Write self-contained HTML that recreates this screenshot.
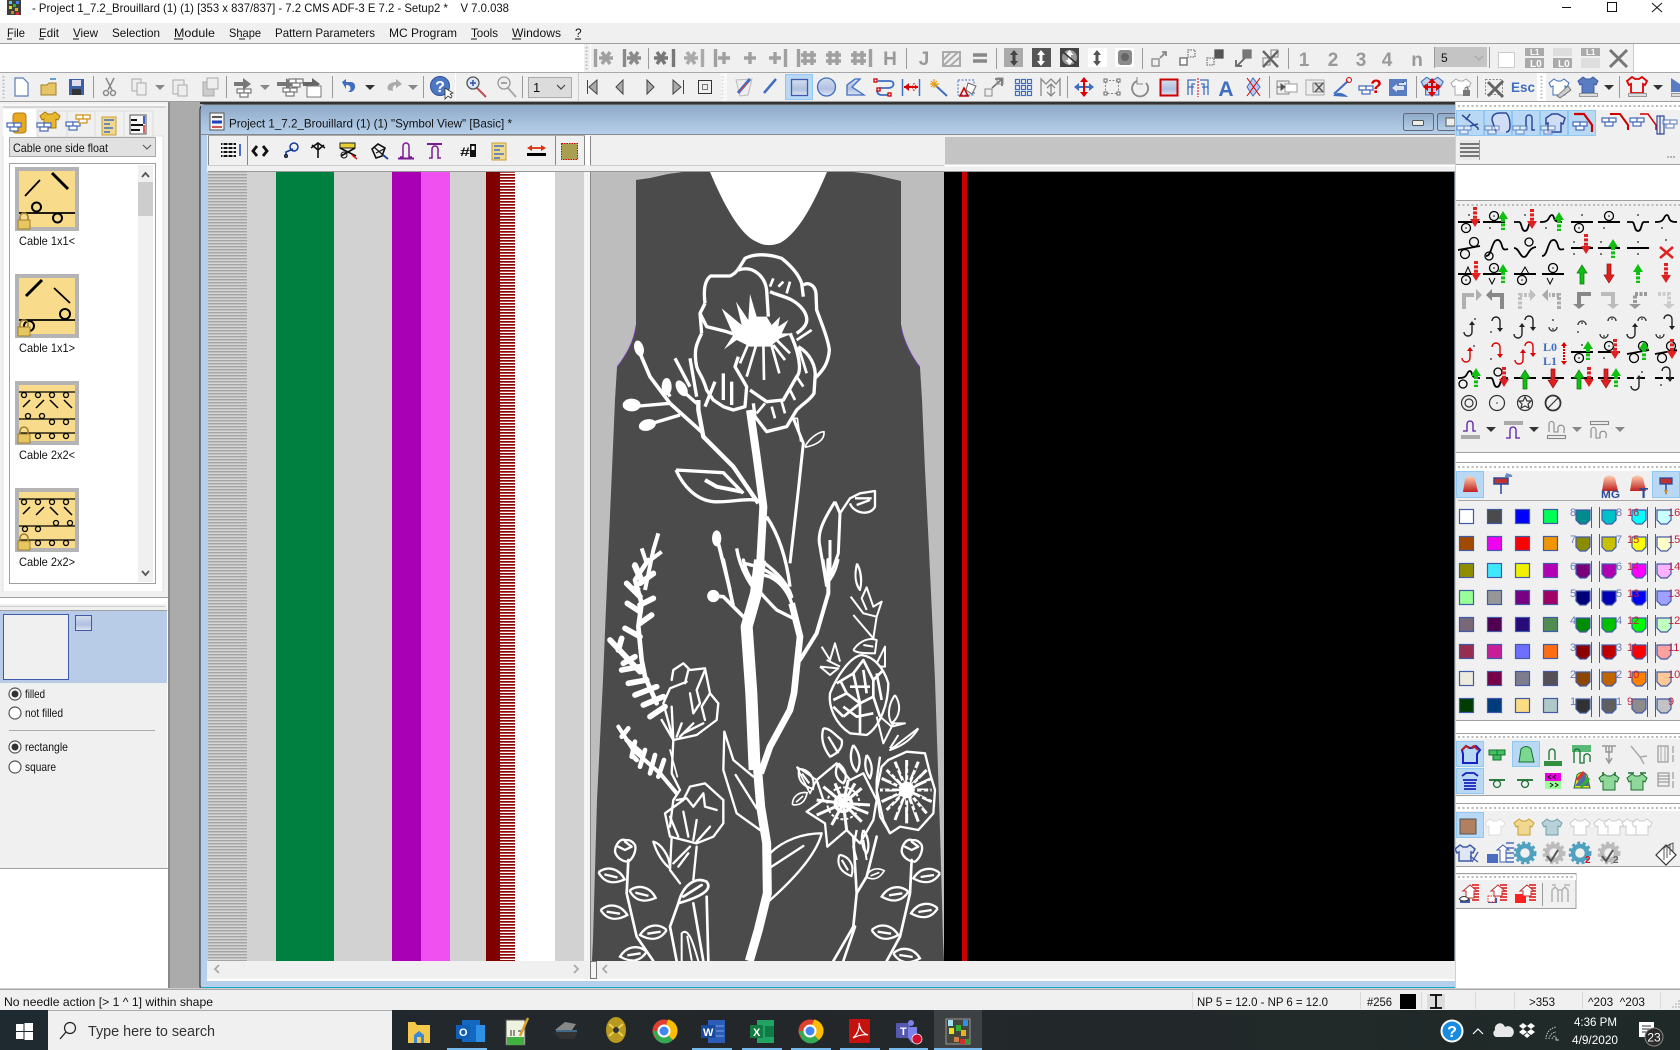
<!DOCTYPE html>
<html><head><meta charset="utf-8"><title>Project</title>
<style>
html,body{margin:0;padding:0;background:#fff;overflow:hidden;width:1680px;height:1050px}
svg{display:block;font-family:"Liberation Sans",sans-serif}
text{fill:#111;font-size:12px}
.b{font-weight:bold;fill:#999;font-size:19px;text-anchor:middle}
.n{font-size:11px;fill:#6a7ab8}
.r{font-size:11px;fill:#c02040}
</style></head><body>
<svg width="1680" height="1050" viewBox="0 0 1680 1050" xmlns="http://www.w3.org/2000/svg">
<defs>
<linearGradient id="tg" x1="0" y1="0" x2="0" y2="1"><stop offset="0" stop-color="#8eaac8"/><stop offset="1" stop-color="#b6cfea"/></linearGradient>
<linearGradient id="bg" x1="0" y1="0" x2="0" y2="1"><stop offset="0" stop-color="#d4def0"/><stop offset=".6" stop-color="#b0c0e0"/><stop offset="1" stop-color="#dfe6f4"/></linearGradient>
<linearGradient id="rb" x1="0" y1="0" x2="0" y2="1"><stop offset="0" stop-color="#ffd0b0"/><stop offset="1" stop-color="#c02020"/></linearGradient>
<linearGradient id="dk" x1="0" y1="0" x2="1" y2="0"><stop offset="0" stop-color="#1e2a30"/><stop offset=".45" stop-color="#24272a"/><stop offset="1" stop-color="#1f2a28"/></linearGradient>
<pattern id="hh" width="3" height="3" patternUnits="userSpaceOnUse"><rect width="3" height="3" fill="#d4d4d4"/><rect width="3" height="1.4" fill="#a4a4a4"/></pattern>
<pattern id="rr" width="3" height="3" patternUnits="userSpaceOnUse"><rect width="3" height="3" fill="#fff"/><rect width="3" height="1.7" fill="#8c0000"/></pattern>
<g id="car"><path d="M-5 -2H5L0 3Z" fill="#333"/></g>
<g id="cag"><path d="M-5 -2H5L0 3Z" fill="#888"/></g>
<g id="a"><path d="M-7 0H7M-4 -6L4 6M4 -6L-4 6" fill="none"/></g>
<g id="p"><path d="M-6 0H6M0 -6V6" fill="none"/></g>
<g id="h"><path d="M-3 -7V7M4 -7V7M-7 -3H8M-7 3H8" fill="none"/></g>
<g id="br"><g fill="#fff" stroke="#4468b8" stroke-width="1.2"><rect x="-7" y="-4" width="7" height="4"/><rect x="0" y="-4" width="7" height="4"/><rect x="-4" y="0" width="8" height="4"/></g></g>
<g id="brg"><g fill="#fff" stroke="#777" stroke-width="1.2"><rect x="-7" y="-4" width="7" height="4"/><rect x="0" y="-4" width="7" height="4"/><rect x="-4" y="0" width="8" height="4"/></g></g>
<g id="lk"><path d="M-4 -2V-5A4 4 0 0 1 4 -5V-2" fill="none" stroke="#a08030" stroke-width="1.6"/><rect x="-6" y="-2" width="12" height="9" fill="#e6c660" stroke="#a08030"/></g>
<g id="ll"><path d="M-11 0H11" stroke="#000" stroke-width="2" fill="none"/><circle cx="-3" cy="6" r="4.500" fill="none" stroke="#000" stroke-width="1.300"/><circle cx="-3" cy="6" r=".8"/></g>
<g id="lu"><path d="M-11 0H11" stroke="#000" stroke-width="2" fill="none"/><circle cx="0" cy="-6" r="4.500" fill="none" stroke="#000" stroke-width="1.300"/><circle cx="0" cy="-6" r=".8"/></g>
<g id="lv"><path d="M-11 0H-6C-3 0 -4 9 0 9S3 0 6 0H11" stroke="#000" stroke-width="1.8" fill="none"/></g>
<g id="ln"><path d="M-11 0C-7 0 -4 0 -2 -4C0 -8 2 -8 3 -4C4 0 8 0 11 0" stroke="#000" stroke-width="1.8" fill="none"/></g>
<g id="sw"><path d="M-11 2L11 -2" stroke="#000" stroke-width="1.8" fill="none"/><circle cx="-4" cy="6" r="4.500" fill="none" stroke="#000" stroke-width="1.3"/><circle cx="5" cy="-6" r="4.500" fill="none" stroke="#000" stroke-width="1.3"/></g>
<g id="wv"><path d="M-11 8C-6 8 -6 -2 -2 -7C2 -10 4 -6 5 -2C6 2 8 2 11 1" stroke="#000" stroke-width="1.8" fill="none"/></g>
<g id="d"><rect x="-1" y="-1" width="2" height="2" fill="#777"/></g>
<g id="ug"><path d="M-5 0L0 -8L5 0H2V11H-2V0Z" fill="#10c010" stroke="#0a700a" stroke-width=".7"/></g>
<g id="dr"><path d="M-5 2L0 10L5 2H2V-9H-2V2Z" fill="#e02020" stroke="#901010" stroke-width=".7"/></g>
<g id="ugd"><path d="M-5 0L0 -8L5 0Z" fill="#10c010"/><path d="M0 0V11" stroke="#10c010" stroke-width="4" stroke-dasharray="3 1.4"/></g>
<g id="drd"><path d="M-5 3L0 11L5 3Z" fill="#e02020"/><path d="M0 -9V3" stroke="#e02020" stroke-width="4" stroke-dasharray="3 1.4"/></g>
<g id="hk"><path d="M-5 4A4 4 0 1 0 3 4V-3" fill="none" stroke="#222" stroke-width="1.4"/><path d="M0 -3L3 -7L6 -3Z" fill="#222"/></g>
<g id="hkd"><path d="M-5 -3A4 4 0 1 1 3 -3V4" fill="none" stroke="#222" stroke-width="1.4"/><path d="M0 4L3 8L6 4Z" fill="#222"/></g>
<g id="hkr"><path d="M-5 4A4 4 0 1 0 3 4V-3" fill="none" stroke="#d00" stroke-width="1.4"/><path d="M0 -3L3 -7L6 -3Z" fill="#d00"/></g>
<g id="hkrd"><path d="M-5 -3A4 4 0 1 1 3 -3V4" fill="none" stroke="#d00" stroke-width="1.4"/><path d="M0 4L3 8L6 4Z" fill="#d00"/></g>
<g id="lo"><path d="M-4 -1A4 4 0 1 1 4 -1" fill="none" stroke="#333" stroke-width="1.3"/><circle cy="-3" r=".8"/></g>
<g id="lf"><path d="M-40 -5C-15 -27 20 -22 40 10C10 27 -20 27 -40 -5M-22 0L18 6" fill="none" stroke="#fff" stroke-width="7"/></g>
<g id="pk"><path d="M-7 -7H7V3L3 7H-3L-7 3Z"/></g>
<g id="sh"><path d="M-5 -8L-2 -6H2L5 -8L10 -4L8 0L6 -1V8H-6V-1L-8 0L-10 -4Z"/></g>
</defs>

<!-- base -->
<rect width="1680" height="1050" fill="#fff"/>
<rect x="7" y="0" width="14" height="15" fill="#3c4036"/>
<rect x="9" y="1" width="3" height="3" fill="#60c0f0"/><rect x="16" y="1" width="3" height="3" fill="#4080f0"/><rect x="9" y="6" width="3" height="3" fill="#e8e020"/><rect x="13" y="4" width="3" height="3" fill="#30b030"/><rect x="15" y="8" width="3" height="3" fill="#e8b020"/><rect x="11" y="11" width="3" height="3" fill="#d08040"/><rect x="16" y="12" width="3" height="3" fill="#d03030"/>
<text x="32" y="12" textLength="477" lengthAdjust="spacingAndGlyphs">- Project 1_7.2_Brouillard (1) (1) [353 x 837/837] - 7.2 CMS ADF-3 E 7.2 - Setup2 *&#160;&#160;&#160; V 7.0.038</text>
<path d="M1562 7.5H1571" stroke="#111"/><rect x="1607.5" y="2.5" width="9" height="9" fill="none" stroke="#111"/><path d="M1652 3L1662 12M1662 3L1652 12" stroke="#111"/>

<!-- menu -->
<rect y="23" width="1680" height="20" fill="#f0f0f0"/><rect y="43" width="1680" height="1" fill="#a0a0a0"/>
<g>
<text x="7" y="37" textLength="18" lengthAdjust="spacingAndGlyphs">File</text>
<text x="39" y="37" textLength="20" lengthAdjust="spacingAndGlyphs">Edit</text>
<text x="73" y="37" textLength="25" lengthAdjust="spacingAndGlyphs">View</text>
<text x="112" y="37" textLength="48" lengthAdjust="spacingAndGlyphs">Selection</text>
<text x="174" y="37" textLength="41" lengthAdjust="spacingAndGlyphs">Module</text>
<text x="229" y="37" textLength="32" lengthAdjust="spacingAndGlyphs">Shape</text>
<text x="275" y="37" textLength="100" lengthAdjust="spacingAndGlyphs">Pattern Parameters</text>
<text x="389" y="37" textLength="68" lengthAdjust="spacingAndGlyphs">MC Program</text>
<text x="471" y="37" textLength="27" lengthAdjust="spacingAndGlyphs">Tools</text>
<text x="512" y="37" textLength="49" lengthAdjust="spacingAndGlyphs">Windows</text>
<text x="575" y="37">?</text>
<path d="M7 39H12M39 39H44M73 39H79M174 39H183M239 39H245M471 39H477M512 39H521M575 39H581" stroke="#111"/>
</g>

<!-- toolbars base -->
<rect x="584" y="44" width="1049" height="28" fill="#f0f0f0"/><rect x="0" y="72" width="1680" height="1" fill="#a8a8a8"/>
<rect x="0" y="73" width="1680" height="28" fill="#f0f0f0"/><rect x="0" y="101" width="1680" height="1" fill="#a0a0a0"/>
<path d="M586.5 47V70" stroke="#bbb" stroke-width="2" stroke-dasharray="1.5 2"/><rect x="590" y="44" width="1" height="28" fill="#fff"/>
<path d="M3.5 76V99" stroke="#bbb" stroke-width="2" stroke-dasharray="1.5 2"/>

<!-- toolbar row 1 -->
<g stroke-width="3.4">
<g stroke="#a0a0a0"><path d="M595.5 49V67"/><use href="#a" x="606" y="58"/></g>
<g stroke="#8a8a8a"><path d="M624.5 49V67"/><use href="#a" x="634" y="58"/></g>
<g stroke="#777"><use href="#a" x="661" y="58"/><path d="M673.5 49V67"/></g>
<g stroke="#aaa"><use href="#a" x="691" y="58"/><path d="M702.5 49V67"/></g>
<g stroke="#a0a0a0"><path d="M715.5 49V67"/><use href="#p" x="724" y="58"/><use href="#p" x="750" y="58"/><use href="#p" x="775" y="58"/><path d="M785.5 49V67"/><path d="M798.5 49V67"/><use href="#h" x="808" y="58"/><use href="#h" x="833" y="58"/><use href="#h" x="858" y="58"/><path d="M870.5 49V67"/></g>
</g>
<text class="b" x="890" y="65">H</text><text class="b" x="924" y="65">J</text>
<g stroke="#aaa" stroke-width="2" fill="none"><path d="M943 52H960V66H943ZM943 60L951 52M943 66L958 52M950 66L960 57"/></g>
<path d="M973 55H987M973 61H987" stroke="#888" stroke-width="3.4"/>
<path d="M648.5 48V69M906.5 48V69M996.5 48V69M1142.5 48V69M1288.5 48V69M1489.5 47V68" stroke="#9a9a9a"/>
<rect x="1004" y="48" width="19" height="19" fill="#aaa"/><rect x="1032" y="48" width="19" height="19" fill="#555"/><rect x="1060" y="48" width="19" height="19" fill="#444"/><rect x="1088" y="48" width="19" height="19" fill="#fff"/><rect x="1115" y="48" width="19" height="19" fill="#fff"/>
<path d="M1014 50L1010 55H1012.500V61H1010L1014 66L1018 61H1015.500V55H1018Z" fill="#444"/>
<path d="M1041 50L1037 55H1039.500V61H1037L1041 66L1045 61H1042.500V55H1045Z" fill="#fff"/>
<circle cx="1069.500" cy="57.500" r="7.500" fill="#999"/><path d="M1069.500 50L1065.500 55H1068V60H1065.500L1069.500 65L1073.500 60H1071V55H1073.500Z" fill="#fff"/><path d="M1063 52L1076 63" stroke="#333" stroke-width="1.500"/>
<path d="M1097 50L1093 55H1095.500V61H1093L1097 66L1101 61H1098.500V55H1101Z" fill="#555"/>
<rect x="1118" y="50" width="14" height="15" rx="3" fill="#8a8a8a"/><circle cx="1125" cy="57" r="4" fill="#666"/>
<g fill="none" stroke="#888" stroke-width="1.300">
<rect x="1152" y="59" width="7" height="7"/><path d="M1160 58L1166 52M1162 52H1166V56" stroke-width="1.800"/>
<rect x="1180" y="58" width="7" height="7" fill="#fff" stroke="#666"/><rect x="1188" y="50" width="7" height="7" stroke-dasharray="1.500 1" stroke="#777"/>
<rect x="1207" y="58" width="7" height="7" stroke-dasharray="1.500 1" stroke="#777"/><rect x="1215" y="50" width="8" height="8" fill="#555" stroke="#555"/>
<path d="M1237 66L1245 58M1236 60V66H1242" stroke-width="1.800" stroke="#666"/><rect x="1243" y="50" width="8" height="8" fill="#777" stroke="#777"/>
<rect x="1263" y="58" width="7" height="7" stroke="#999"/><rect x="1271" y="50" width="7" height="7" stroke="#999"/><path d="M1263 51L1278 67M1278 51L1263 67" stroke="#666" stroke-width="2.400"/>
</g>
<text class="b" x="1304" y="66">1</text><text class="b" x="1333" y="66">2</text><text class="b" x="1361" y="66">3</text><text class="b" x="1387" y="66">4</text><text class="b" x="1417" y="66">n</text>
<rect x="1434" y="47" width="53" height="20" fill="#c4c4c4"/><path d="M1434.500 47V68" stroke="#999"/><text x="1441" y="62">5</text><path d="M1475 56L1479 60L1483 56" fill="none" stroke="#aaa" stroke-width="1.300"/>
<rect x="1498.500" y="52.500" width="16" height="15" fill="#fff" stroke="#ccc"/>
<g><rect x="1525" y="48" width="19" height="8" fill="#aaa"/><rect x="1525" y="58" width="19" height="10" fill="#aaa"/><rect x="1553" y="48" width="19" height="8" fill="#ddd"/><rect x="1553" y="58" width="19" height="10" fill="#aaa"/><rect x="1581" y="48" width="19" height="8" fill="#aaa"/><rect x="1581" y="58" width="19" height="10" fill="#ddd"/></g>
<g style="font-weight:bold"><text x="1530" y="55" style="font-size:8px;fill:#fff;font-weight:bold">L1</text><text x="1530" y="67" style="font-size:10px;fill:#fff;font-weight:bold">L0</text><text x="1558" y="67" style="font-size:10px;fill:#fff;font-weight:bold">L0</text><text x="1586" y="55" style="font-size:8px;fill:#fff;font-weight:bold">L1</text></g>
<path d="M1610 50L1627 67M1627 50L1610 67" stroke="#777" stroke-width="3"/>
<rect x="1633" y="44" width="1" height="28" fill="#ccc"/>

<!-- toolbar row 2 -->
<path d="M93.500 76V98M226.500 76V98M332.500 76V98M423.500 76V98M522.500 76V98M1067.500 76V98M1269.500 76V98M1416.500 76V98M1477.500 76V98M1619.500 76V98" stroke="#999"/>
<rect x="455" y="73" width="1" height="28" fill="#fff"/><rect x="578" y="73" width="1" height="28" fill="#ccc"/>
<path d="M15 78H23L28 83V96H15Z" fill="#fff" stroke="#5a7ab8" stroke-width="1.200"/>
<path d="M41 85H47L49 83H56V95H41Z" fill="#e8c468" stroke="#a08030"/><path d="M50 79L56 79" stroke="#4080c0" stroke-width="1.500"/>
<rect x="69" y="79" width="15" height="16" fill="#3d5fa8"/><rect x="72" y="80" width="9" height="6" fill="#dde"/><rect x="72" y="89" width="9" height="6" fill="#333"/>
<g fill="none" stroke="#888" stroke-width="1.500"><path d="M106 78L112 90M114 78L108 90"/><circle cx="106" cy="93" r="2.500"/><circle cx="113" cy="93" r="2.500"/></g>
<g fill="#eee" stroke="#aaa"><rect x="132" y="79" width="9" height="12"/><rect x="137" y="83" width="9" height="12"/><rect x="173" y="80" width="11" height="14"/><rect x="178" y="85" width="9" height="11"/><rect x="203" y="82" width="11" height="14" fill="#ccc"/><rect x="207" y="78" width="11" height="11"/></g>
<use href="#cag" x="160" y="87"/><use href="#cag" x="265" y="87"/><use href="#car" x="370" y="87"/><use href="#cag" x="413" y="87"/>
<path d="M234 82H243V78L251 84L243 90V86H234Z" fill="#777"/><use href="#brg" x="244" y="93"/>
<path d="M277 82H286V78L294 84L286 90V86H277Z" fill="#777"/><use href="#brg" x="290" y="92"/><use href="#brg" x="296" y="83"/>
<path d="M303 82H312V78L320 84L312 90V86H303Z" fill="#666"/><rect x="307" y="86" width="14" height="11" fill="#fff" stroke="#777"/>
<path d="M342 82L346 79V82H351C356 82 357 90 351 92L348 92C352 90 351 85 347 85H346V89Z" fill="#3f6ec0"/>
<path d="M388 90C386 84 392 82 396 82V79L402 84L396 88V85C393 85 392 88 393 91Z" fill="#aaa"/>
<circle cx="440" cy="86" r="9.500" fill="#4d78c4" stroke="#2e4f96"/><text x="440" y="92" style="font-size:16px;font-weight:bold;fill:#fff;text-anchor:middle">?</text><path d="M445 88L445 99L448 96L451 98L452 96L450 94L453 93Z" fill="#fff" stroke="#333" stroke-width=".8"/>
<circle cx="473" cy="83" r="6" fill="#dde6f6" stroke="#555" stroke-width="1.300"/><path d="M470 83H476M473 80V86" stroke="#2d50b0" stroke-width="1.500"/><path d="M477 88L486 97" stroke="#c05050" stroke-width="2"/>
<circle cx="504" cy="83" r="6" fill="#eee" stroke="#999" stroke-width="1.300"/><path d="M501 83H507" stroke="#888" stroke-width="1.500"/><path d="M508 88L516 97" stroke="#aaa" stroke-width="2"/>
<rect x="528.500" y="77.500" width="43" height="20" fill="#dcdcdc" stroke="#aaa"/><text x="533" y="92" style="font-size:13px">1</text><path d="M557 85L561 89L565 85" fill="none" stroke="#444" stroke-width="1.200"/>
<g fill="#aaa" stroke="#444"><path d="M597 80L589 87L597 94ZM587.500 80V94" /><path d="M623 80L616 87L623 94Z"/><path d="M647 80L654 87L647 94Z"/><path d="M673 80L681 87L673 94ZM683.500 80V94"/></g>
<rect x="698.500" y="80.500" width="13" height="13" fill="none" stroke="#333"/><rect x="702.500" y="84.500" width="5" height="5" fill="none" stroke="#777"/>
<path d="M722.500 76V99" stroke="#bbb" stroke-width="2" stroke-dasharray="1.500 2"/><rect x="721" y="73" width="6" height="28" fill="#fff" opacity=".5"/>
<path d="M740 96L736 80L752 79L748 95Z" fill="#eee" stroke="#bbb"/><path d="M738 93L750 79" stroke="#3f6ec0" stroke-width="3"/><path d="M740 91L747 83" stroke="#e04040" stroke-width="1"/>
<path d="M764 93L776 79" stroke="#3f6ec0" stroke-width="2.500"/>
<rect x="785.500" y="74.500" width="27" height="25" fill="#b8d8f4" stroke="#90c8f4"/><rect x="791.500" y="79.500" width="16" height="16" fill="url(#bg)" stroke="#3f5aa8" stroke-width="1.300"/>
<circle cx="826.500" cy="87" r="9" fill="url(#bg)" stroke="#3f6ec0" stroke-width="1.300"/>
<path d="M847 95V85L855 79H860L852 87L864 95Z" fill="url(#bg)" stroke="#3f6ec0" stroke-width="1.300"/>
<path d="M878 81H890C895 81 895 88 888 88H880C876 88 876 94 881 95H890" fill="none" stroke="#3f6ec0" stroke-width="1.800"/><g fill="#fff" stroke="#c00" stroke-width="1.300"><rect x="874" y="79" width="3" height="3"/><rect x="877" y="88" width="3" height="3"/><rect x="888" y="93" width="3" height="3"/></g>
<path d="M902.500 79V96M919.500 79V96" stroke="#3f6ec0" stroke-width="1.500"/><path d="M904 87H918" stroke="#d00" stroke-width="2"/><path d="M904 87L909 83V91ZM918 87L913 83V91ZM911 87L915 83V91Z" fill="#d00"/>
<path d="M934 84L947 96" stroke="#3f6ec0" stroke-width="2"/><path d="M934 79L934 88M930 84H939M931 81L937 87M937 81L931 87" stroke="#e8a010" stroke-width="1.200"/>
<rect x="958" y="80" width="16" height="15" fill="none" stroke="#3f6ec0" stroke-dasharray="2 1.500"/><path d="M960 96H968L964 88Z" fill="none" stroke="#c00" stroke-width="1.500"/><path d="M968 83L976 86L972 94L966 90Z" fill="#fff" stroke="#666"/>
<rect x="985" y="89" width="7" height="7" fill="none" stroke="#888"/><path d="M992 88L1001 80M995 79H1002V86" fill="none" stroke="#777" stroke-width="1.800"/><rect x="997" y="78" width="6" height="6" fill="none" stroke="#888"/>
<g fill="none" stroke="#3f6ec0" stroke-width="1.200"><rect x="1015.500" y="79.500" width="4" height="4"/><rect x="1021.500" y="79.500" width="4" height="4"/><rect x="1027.500" y="79.500" width="4" height="4"/><rect x="1015.500" y="85.500" width="4" height="4"/><rect x="1021.500" y="85.500" width="4" height="4"/><rect x="1027.500" y="85.500" width="4" height="4"/><rect x="1015.500" y="91.500" width="4" height="4"/><rect x="1021.500" y="91.500" width="4" height="4"/><rect x="1027.500" y="91.500" width="4" height="4"/></g>
<path d="M1041 96V79L1046 84L1051 79L1056 84L1060 79V96M1051 84V96M1047 88L1051 84L1055 88M1047 92L1051 96L1055 92" fill="none" stroke="#888" stroke-width="1.300"/>
<path d="M1075 87H1093" stroke="#3f6ec0" stroke-width="2"/><path d="M1084 78V96" stroke="#d00" stroke-width="2"/><path d="M1084 77L1080 82H1088ZM1084 97L1080 92H1088Z" fill="#d00"/><path d="M1074 87L1079 83V91ZM1094 87L1089 83V91Z" fill="#3f6ec0"/>
<rect x="1105.500" y="80.500" width="13" height="13" fill="none" stroke="#888" stroke-dasharray="2 1.500"/><g fill="#fff" stroke="#666"><rect x="1104" y="79" width="3" height="3"/><rect x="1117" y="79" width="3" height="3"/><rect x="1104" y="92" width="3" height="3"/><rect x="1117" y="92" width="3" height="3"/></g>
<path d="M1146 83A8 8 0 1 1 1137 81" fill="none" stroke="#888" stroke-width="1.800"/><path d="M1137 77V84H1143" fill="none" stroke="#888" stroke-width="1"/>
<rect x="1160.500" y="79.500" width="17" height="16" fill="url(#bg)" stroke="#c00" stroke-width="2"/>
<path d="M1188 95V80H1196M1188 87H1194M1192 95V84H1195M1208 95V80H1200M1208 87H1202M1204 95V84H1201" fill="none" stroke="#3f6ec0" stroke-width="1.300"/><path d="M1198 78V97" stroke="#d00" stroke-dasharray="2 1"/>
<text x="1226" y="96" style="font-size:21px;font-weight:bold;fill:#3f6ec0;text-anchor:middle">A</text>
<path d="M1253 78L1247 87L1253 96L1260 87Z" fill="#b8cdf0" stroke="#3f6ec0"/><path d="M1247 78L1260 96M1260 78L1247 96" stroke="#d00"/>
<rect x="1277" y="81" width="12" height="13" fill="#eee" stroke="#888"/><rect x="1285" y="84" width="12" height="8" fill="#fff" stroke="#999"/><path d="M1277 87H1285M1285 87L1281 84V90Z" stroke="#555" fill="#555"/>
<rect x="1306" y="80" width="18" height="15" fill="#eee" stroke="#aaa"/><rect x="1313" y="83" width="11" height="9" fill="#ddd" stroke="#888"/><path d="M1315 83L1323 92M1323 83L1315 92" stroke="#555" stroke-width="1.500"/>
<path d="M1334 94L1348 81" stroke="#3f6ec0" stroke-width="2"/><circle cx="1349" cy="80" r="2.500" fill="none" stroke="#d00"/><path d="M1333 96C1338 90 1345 94 1348 97Z" fill="#3f6ec0"/>
<use href="#br" x="1366" y="90"/><text x="1376" y="93" style="font-size:19px;font-weight:bold;fill:#d00;text-anchor:middle">?</text>
<rect x="1389" y="79" width="18" height="17" fill="#5a7cc0"/><path d="M1392 88L1397 84V86H1404V90H1397V92Z" fill="#dce4f4"/><path d="M1405 82V84H1399" stroke="#dce4f4" stroke-width="2"/>
<use href="#sh" x="1432" y="87" fill="url(#bg)" stroke="#3f6ec0" transform="translate(-143 -9.6) scale(1.100)"/><path d="M1425 87H1439M1432 80V95" stroke="#d00" stroke-width="2"/><path d="M1432 78L1428 83H1436ZM1432 97L1428 92H1436ZM1423 87L1428 83V91ZM1441 87L1436 83V91Z" fill="#d00"/>
<use href="#sh" x="1461" y="87" fill="#fff" stroke="#aaa"/><rect x="1463" y="90" width="7" height="6" fill="#777"/><path d="M1465 90V88A2 2 0 0 1 1468 88V90" stroke="#777" fill="none"/>
<rect x="1485.500" y="79.500" width="17" height="15" fill="none" stroke="#888" stroke-dasharray="2 1.500"/><path d="M1488 82L1503 97M1503 81L1488 96" stroke="#666" stroke-width="3"/>
<text x="1523" y="92" style="font-size:14px;font-weight:bold;fill:#3f6ec0;text-anchor:middle" textLength="24" lengthAdjust="spacingAndGlyphs">Esc</text>
<rect x="1537" y="73" width="9" height="28" fill="#fff"/><path d="M1541.500 76V99" stroke="#bbb" stroke-width="2" stroke-dasharray="1.500 2"/>
<use href="#sh" x="1559" y="87" fill="#fff" stroke="#3f6ec0"/><path d="M1557 96L1568 86L1571 90L1560 98Z" fill="#ccc" stroke="#666" stroke-width=".8"/>
<use href="#sh" x="1588" y="85" fill="#5a7cc0" stroke="#3f5aa8"/><rect x="1579.500" y="93.500" width="18" height="3" fill="#ddd" stroke="#999"/>
<use href="#car" x="1609" y="87"/>
<use href="#sh" x="1637" y="85" fill="none" stroke="#d00" stroke-width="1.800"/><rect x="1628.500" y="93.500" width="18" height="3" fill="#ddd" stroke="#999"/>
<use href="#car" x="1658" y="87"/>
<path d="M1671 78L1680 84V92H1671Z" fill="#5a7cc0"/><rect x="1671.500" y="93.500" width="9" height="3" fill="#ddd" stroke="#999"/>

<!-- left panel -->
<rect x="0" y="102" width="168" height="495" fill="#f0f0f0"/><rect x="168" y="102" width="2" height="888" fill="#888"/>
<path d="M3 107H166" stroke="#bbb"/><path d="M0 105H168" stroke="#fff"/>
<rect x="3" y="136" width="160" height="456" fill="#fff" stroke="#e0e0e0"/>
<rect x="38" y="111" width="29" height="26" fill="#f0f0f0" stroke="#ddd"/><rect x="67" y="111" width="28" height="26" fill="#f0f0f0" stroke="#ddd"/><rect x="95" y="111" width="29" height="26" fill="#f0f0f0" stroke="#ddd"/><rect x="124" y="111" width="29" height="26" fill="#f0f0f0" stroke="#ddd"/>
<rect x="3" y="109" width="33" height="28" fill="#fff"/>
<rect x="13" y="113" width="13" height="20" rx="3" fill="#e8a820" stroke="#b07a10"/><use href="#br" x="14" y="127"/>
<use href="#sh" x="50" y="120" fill="#e8b830" stroke="#a87810"/><use href="#br" x="44" y="127"/>
<use href="#br" x="73" y="126"/><g fill="#fff" stroke="#d09010" stroke-width="1.200"><rect x="76" y="115" width="7" height="4"/><rect x="83" y="115" width="7" height="4"/><rect x="79" y="119" width="8" height="4"/></g>
<rect x="102" y="117" width="14" height="18" fill="#f0d890" stroke="#c8a030"/><path d="M104 120H114M104 124H110M104 128H113M104 132H110" stroke="#4070c0" stroke-width="1.500"/>
<rect x="130" y="115" width="16" height="19" fill="#f8f8f8" stroke="#555"/><path d="M131 120H137M131 125H143M131 130H140" stroke="#111" stroke-width="2"/><path d="M144 116V124" stroke="#4060c0" stroke-width="2"/><path d="M144 125V133" stroke="#d03030" stroke-width="1.500"/>
<rect x="9.500" y="137.500" width="146" height="19" fill="#e1e1e1" stroke="#a8a8a8"/>
<text x="13" y="152" textLength="95" lengthAdjust="spacingAndGlyphs">Cable one side float</text><path d="M143 145L147 149L151 145" fill="none" stroke="#555" stroke-width="1.100"/>
<rect x="9.500" y="163.500" width="146" height="420" fill="#fff" stroke="#a0a0a0"/>
<rect x="138" y="165" width="15" height="417" fill="#f0f0f0"/><rect x="138" y="182" width="15" height="34" fill="#cdcdcd"/>
<path d="M142 177L145.500 173L149 177M142 571L145.500 575L149 571" fill="none" stroke="#555" stroke-width="1.800"/>
<!-- items -->
<g>
<rect x="15" y="167" width="64" height="64" fill="#b4b4b4"/><rect x="19" y="171" width="56" height="56" fill="#f8dc8c"/>
<path d="M25 196L40 180" stroke="#000" stroke-width="1.800"/><path d="M52 173L68 189" stroke="#000" stroke-width="3"/><path d="M19 213H75" stroke="#000" stroke-width="1.800"/><g fill="none" stroke="#000" stroke-width="2"><circle cx="36.500" cy="207" r="4.500"/><circle cx="57.500" cy="218" r="4.500"/></g><use href="#lk" x="24" y="222"/>
<text x="19" y="245" textLength="56" lengthAdjust="spacingAndGlyphs">Cable 1x1&lt;</text>
<rect x="15" y="274" width="64" height="64" fill="#b4b4b4"/><rect x="19" y="278" width="56" height="56" fill="#f8dc8c"/>
<path d="M26 296L42 280" stroke="#000" stroke-width="3"/><path d="M54 288L70 303" stroke="#000" stroke-width="1.800"/><path d="M19 320H75" stroke="#000" stroke-width="1.800"/><g fill="none" stroke="#000" stroke-width="2"><circle cx="65" cy="314" r="5"/><circle cx="29" cy="326" r="5"/></g><use href="#lk" x="24" y="329"/>
<text x="19" y="352" textLength="56" lengthAdjust="spacingAndGlyphs">Cable 1x1&gt;</text>
<rect x="15" y="381" width="64" height="64" fill="#b4b4b4"/><rect x="19" y="385" width="56" height="56" fill="#f8dc8c"/>
<path d="M19 392H75M19 419H75M19 433H75" stroke="#000" stroke-width="1.300"/><path d="M23 407L30 400M36 408L44 400M50 400L58 408M64 400L72 408" stroke="#000" stroke-width="1.500"/>
<g fill="none" stroke="#000" stroke-width="1.300"><circle cx="24" cy="395" r="2.500"/><circle cx="38" cy="395" r="2.500"/><circle cx="52" cy="395" r="2.500"/><circle cx="66" cy="395" r="2.500"/><circle cx="28" cy="416" r="2.500"/><circle cx="42" cy="416" r="2.500"/><circle cx="52" cy="422" r="2.500"/><circle cx="66" cy="422" r="2.500"/><circle cx="38" cy="436" r="2.500"/><circle cx="52" cy="436" r="2.500"/><circle cx="66" cy="436" r="2.500"/></g><use href="#lk" x="24" y="436"/>
<text x="19" y="459" textLength="56" lengthAdjust="spacingAndGlyphs">Cable 2x2&lt;</text>
<rect x="15" y="488" width="64" height="64" fill="#b4b4b4"/><rect x="19" y="492" width="56" height="56" fill="#f8dc8c"/>
<path d="M19 499H75M19 526H75M19 540H75" stroke="#000" stroke-width="1.300"/><path d="M23 514L30 507M36 515L44 507M50 507L58 515M64 507L72 515" stroke="#000" stroke-width="1.500"/>
<g fill="none" stroke="#000" stroke-width="1.300"><circle cx="24" cy="502" r="2.500"/><circle cx="38" cy="502" r="2.500"/><circle cx="52" cy="502" r="2.500"/><circle cx="66" cy="502" r="2.500"/><circle cx="56" cy="523" r="2.500"/><circle cx="70" cy="523" r="2.500"/><circle cx="25" cy="529" r="2.500"/><circle cx="38" cy="529" r="2.500"/><circle cx="38" cy="543" r="2.500"/><circle cx="52" cy="543" r="2.500"/><circle cx="66" cy="543" r="2.500"/></g><use href="#lk" x="24" y="543"/>
<text x="19" y="566" textLength="56" lengthAdjust="spacingAndGlyphs">Cable 2x2&gt;</text>
</g>
<rect x="0" y="592" width="168" height="5" fill="#f0f0f0"/><rect x="0" y="597" width="168" height="1" fill="#a0a0a0"/>
<rect x="0" y="604" width="167" height="264" fill="#f0f0f0"/><path d="M0 606.500H165" stroke="#ccc"/><rect x="0" y="610" width="167" height="1" fill="#a0a0a0"/>
<rect x="0" y="611" width="167" height="72" fill="#b8cce8"/>
<rect x="3.500" y="614.500" width="65" height="65" fill="#f0f0f0" stroke="#3f5aa8" stroke-width="1"/><rect x="75.500" y="615.500" width="16" height="15" fill="url(#bg)" stroke="#3f5aa8"/>
<g fill="#fff" stroke="#555" stroke-width="1.200"><circle cx="15" cy="694" r="6"/><circle cx="15" cy="713" r="6"/><circle cx="15" cy="747" r="6"/><circle cx="15" cy="767" r="6"/></g><circle cx="15" cy="694" r="3.500" fill="#333"/><circle cx="15" cy="747" r="3.500" fill="#333"/>
<text x="25" y="698" textLength="20" lengthAdjust="spacingAndGlyphs">filled</text><text x="25" y="717" textLength="38" lengthAdjust="spacingAndGlyphs">not filled</text>
<text x="25" y="751" textLength="43" lengthAdjust="spacingAndGlyphs">rectangle</text><text x="25" y="771" textLength="31" lengthAdjust="spacingAndGlyphs">square</text>
<path d="M9 730.500H155" stroke="#aaa"/><rect x="0" y="868" width="168" height="1" fill="#a0a0a0"/>

<!-- MDI -->
<rect x="170" y="102" width="1285" height="888" fill="#ababab"/>
<rect x="200" y="102" width="1255" height="2" fill="#333"/>
<path d="M200 987V110Q200 105 205 105H1455V987Z" fill="#b6cfea" stroke="#222" stroke-width="1"/>
<rect x="201" y="105" width="1254" height="29" fill="url(#tg)"/>
<rect x="201" y="134" width="1254" height="1" fill="#888"/>
<rect x="210" y="113" width="14" height="17" fill="#f4f4f4" stroke="#555"/><path d="M212 117H222" stroke="#222" stroke-width="1.500"/><path d="M212 122H222" stroke="#2040c0" stroke-width="3"/><path d="M212 127H222" stroke="#c02020" stroke-width="1.500"/>
<text x="229" y="127.500" textLength="283" lengthAdjust="spacingAndGlyphs">Project 1_7.2_Brouillard (1) (1) "Symbol View" [Basic] *</text>
<rect x="1403.500" y="113.500" width="30" height="17" rx="2" fill="url(#tg)" stroke="#667"/><rect x="1412.500" y="120.500" width="11" height="5" rx="1" fill="#eee" stroke="#555"/>
<rect x="1437.500" y="113.500" width="30" height="17" rx="2" fill="url(#tg)" stroke="#667"/><rect x="1446" y="118" width="9" height="8" fill="#eee" stroke="#555"/>
<rect x="207" y="135" width="1248" height="37" fill="#f0f0f0"/><rect x="201" y="135" width="6" height="852" fill="#b6cfea"/>
<rect x="208" y="135" width="377" height="1" fill="#aaa"/>
<path d="M208.500 136V165M247.500 136V165M555.500 136V165M584.500 136V165M590.500 136V165" stroke="#888"/><path d="M208 165.500H585M590 165.500H944" stroke="#ccc"/><path d="M208 171.500H1455" stroke="#999"/><rect x="585" y="135" width="5" height="30" fill="#fff"/>
<rect x="945" y="137" width="510" height="28" fill="#c4c4c4"/><path d="M945 165.500H1455" stroke="#fff" stroke-width="2"/>
<!-- symbol toolbar icons -->
<g fill="none" stroke="#111">
<path d="M221 144H236M221 148H236M221 152H236M221 156H236" stroke-width="2"/><path d="M223 143V157M228 143V157M233 143V157" stroke-width="1" stroke="#fff"/><path d="M240 144V156" stroke="#1040c0" stroke-width="1.500"/>
<path d="M257 146L253 151L257 156M263 146L267 151L263 156" stroke-width="2.800"/>
<circle cx="294" cy="147" r="4" stroke="#123a9a" stroke-width="1.500"/><path d="M286 158L286 152L293 149" stroke="#123a9a" stroke-width="1.500"/><circle cx="286" cy="156" r="1.500"/>
<path d="M311 148L318 143L325 148M318 143V158M312 145L318 150L324 145" stroke-width="1.600"/>
<rect x="340" y="143" width="15" height="5" fill="#e8d030" stroke="#222"/><path d="M340 148L356 156M355 148L341 156" stroke-width="1.600"/><circle cx="344" cy="155" r="3"/><path d="M352 155L357 159" stroke="#d02020" stroke-width="1.500"/>
<path d="M372 149L378 144L385 148L382 156L376 158Z" stroke-width="1.600"/><path d="M374 147L384 156M376 153L384 149" stroke-width="1.200"/><path d="M383 155L388 159" stroke="#2040a0" stroke-width="1.800"/>
<path d="M400 157H403V146A3 3 0 0 1 409 146V157H412" stroke="#7a1a90" stroke-width="1.500"/><path d="M398 158.500H414" stroke="#7a1a90" stroke-width="2"/>
<path d="M427 144H442" stroke="#7a1a90" stroke-width="2"/><path d="M429 158H432V149A3 3 0 0 1 438 149V158H441" stroke="#7a1a90" stroke-width="1.500"/>
</g>
<text x="460" y="156" style="font-size:12px;font-weight:bold" textLength="10" lengthAdjust="spacingAndGlyphs">#</text><rect x="470" y="144" width="6" height="13" fill="#111"/><rect x="471.500" y="146" width="3" height="4" fill="#fff"/>
<rect x="492" y="143" width="14" height="17" fill="#f0d890" stroke="#c8a030"/><path d="M494 146H504M494 150H500M494 154H504M494 158H500" stroke="#4070c0" stroke-width="1.500"/>
<path d="M529 148H544" stroke="#e03010" stroke-width="1.800"/><path d="M527 148L532 145V151ZM546 148L541 145V151Z" fill="#e03010"/><rect x="527" y="153" width="19" height="3" fill="#000"/>
<rect x="561.500" y="143.500" width="16" height="16" fill="#a8a050" stroke="#c00" stroke-dasharray="1.500 1"/>

<!-- left canvas -->
<rect x="208" y="172" width="376" height="789" fill="#d2d2d2"/>
<rect x="208" y="172" width="39" height="789" fill="url(#hh)"/>
<rect x="276" y="172" width="58" height="789" fill="#008040"/>
<rect x="392" y="172" width="29" height="789" fill="#aa00b4"/>
<rect x="421" y="172" width="29" height="789" fill="#f050f0"/>
<rect x="486" y="172" width="14" height="789" fill="#800000"/>
<rect x="500" y="172" width="15" height="789" fill="url(#rr)"/>
<rect x="515" y="172" width="40" height="789" fill="#fff"/>
<rect x="584" y="172" width="6" height="789" fill="#f4f4f4"/><path d="M590.500 172V961" stroke="#888"/>
<!-- right canvas -->
<rect x="591" y="172" width="353" height="789" fill="#bdbdbd"/>
<rect x="944" y="172" width="510" height="789" fill="#000"/>
<rect x="962" y="172" width="5" height="789" fill="#c80000"/>
<path d="M636 180L650 178L668 174L683 172H853L870 174L888 178L901 181V325C903 340 912 357 920 367L922 400L925 470L929 550L935 680L940 830L943 940L944 961H592L593 940L597 800L603 680L608 560L612 470L615 400L617 367C626 355 634 342 636 325Z" fill="#4b4b4b"/>
<path d="M636 325C634 342 626 355 617 367M901 325C903 340 912 357 920 367" fill="none" stroke="#8040d0" stroke-width=".8"/>
<path d="M710 172C724 205 740 235 757 242C764 246 772 246 780 243C800 232 815 200 827 172Z" fill="#fff"/>
<!-- flower art upper -->
<g transform="translate(590,170) scale(.33333)" fill="none" stroke="#fff" stroke-width="10" stroke-linejoin="round">
<path d="M345 400C340 360 345 330 362 318L420 318C440 310 450 290 465 265C490 252 530 250 575 265C600 285 625 310 635 340L640 380"/>
<path d="M640 345C655 335 675 345 678 370L680 420C695 460 715 510 718 540C715 580 700 600 675 625L672 670C660 690 640 700 620 720L590 770L530 785L495 740L490 700"/>
<path d="M445 300C490 285 525 320 530 360L535 440"/>
<path d="M540 365C570 380 610 380 640 420C660 450 650 470 620 490"/>
<path d="M345 400L330 430L335 490M330 430L350 470L410 485L440 495M335 490C320 520 310 540 320 590C330 620 335 610 350 660L370 690L400 710L430 720L465 710L470 650L435 590L445 560"/>
<path d="M600 490C620 530 640 600 620 620L580 690L530 695L480 660"/>
<path d="M625 530C660 550 680 590 675 625"/>
<path d="M395 415L455 465L438 395L475 450L480 372L500 440L530 440L545 465L570 440L565 470L595 450L575 490L610 490L570 505L540 530L480 530L440 510L402 538L430 495Z" fill="#fff" stroke="none"/>
<path d="M520 510L522 630M500 520L470 620M480 510L450 580M540 510L568 610M560 510L600 550M550 525L585 570M620 510L665 480M625 530L650 610" stroke-width="8"/>
<path d="M540 350L550 325M565 350L580 335M590 370L600 335M620 620L640 650M600 660L615 690M575 695L585 730M545 710L555 745M525 700L500 730" stroke-width="8"/>
<path d="M480 720L500 860L520 1010L510 1190" stroke-width="24"/>
<path d="M610 745L640 820L625 960L600 1180" stroke-width="9"/><path d="M605 745L622 745L632 815" stroke-width="5"/>
<path d="M645 830C660 800 690 785 702 785C705 810 680 825 645 832" stroke-width="5"/>
<path d="M505 1000L430 890L340 800L325 720L325 690" stroke-width="13"/>
<path d="M340 790L240 700L180 620L150 550" stroke-width="11"/>
<path d="M125 710L240 700M170 765L270 735M240 680L225 650M320 700L275 660M320 680L300 565M300 650L255 565M345 710L375 635M400 690L400 610M425 705L425 635" stroke-width="10"/>
<g fill="#fff" stroke="none"><ellipse cx="147" cy="535" rx="14" ry="24" transform="rotate(-15 147 535)"/><ellipse cx="230" cy="650" rx="15" ry="26"/><ellipse cx="275" cy="655" rx="15" ry="26" transform="rotate(-30 275 655)"/><ellipse cx="125" cy="705" rx="27" ry="19"/><ellipse cx="172" cy="765" rx="26" ry="17" transform="rotate(-15 172 765)"/><ellipse cx="380" cy="1105" rx="14" ry="24"/></g>
<path d="M258 900C280 950 320 990 370 995C420 998 460 985 495 990M258 900L400 908L460 970"/>
<path d="M345 930L380 950L455 965" stroke-width="12"/>
<path d="M735 995C700 1050 680 1090 690 1130L710 1250M735 995L750 1030L745 1150L710 1250M720 1110L720 1230" stroke-width="9"/>
<path d="M750 1030L780 985L810 970L855 963L855 1010C840 1040 790 1030 780 1000M795 985L845 985M800 1005L840 990" stroke-width="7"/>
<path d="M385 1120L420 1260" stroke-width="11"/>
<path d="M440 1135C450 1200 490 1260 500 1260M460 1180C520 1190 570 1220 590 1260M530 1040C570 1100 590 1170 600 1250" stroke-width="10"/>
<path d="M800 1180C790 1220 800 1240 810 1260C815 1230 810 1200 800 1180" stroke-width="4"/>
<path d="M205 1090L190 1140L165 1260M155 1135L170 1180M215 1145L175 1175M130 1185L150 1230M195 1210L160 1235M118 1250L150 1260" stroke-width="12"/>
</g>
<!-- flower art lower -->
<g transform="translate(590,560) scale(.33333)" fill="none" stroke="#fff" stroke-width="7" stroke-linejoin="round" stroke-linecap="round">
<path d="M510 0L498 100L470 200L484 400L494 630" stroke-width="36" stroke-linecap="butt"/>
<path d="M502 620L512 740L530 850L532 1000L505 1110L478 1203" stroke-width="27" stroke-linecap="butt"/>
<path d="M605 130L630 230L612 400L600 450L540 560L512 640" stroke-width="20" stroke-linecap="butt"/>
<path d="M715 0L715 100L680 220L630 300" stroke-width="12"/>
<path d="M470 180L430 140L400 110L370 108M430 140L400 0" stroke-width="11"/><circle cx="370" cy="108" r="15" fill="#fff"/>
<path d="M460 0C470 50 500 90 560 150L610 175M490 50C540 30 590 80 605 130M510 0C540 20 590 60 605 110" stroke-width="10"/>
<path d="M700 0C705 40 715 70 720 60C735 40 740 20 745 0M720 10V55" stroke-width="7"/>
<path d="M403 515L400 630L440 760L510 810M403 515L430 600L490 650M437 645L500 745" stroke-width="7"/>
<path d="M540 880C580 840 640 820 695 820C680 880 620 950 535 1025M545 920L640 858" stroke-width="7"/>
<!-- fern -->
<path d="M175 0L135 60L155 130L145 200L155 300L165 350L200 430" stroke-width="14"/>
<path d="M135 15L155 60M190 40L150 70M110 70L150 110M190 115L150 135M112 130L150 155M185 165L150 190M105 205L150 230M60 240L150 335M85 270L95 235M100 310L135 290M95 330L150 320M115 370L170 360M135 405L200 380M160 435L220 410M180 470L225 440" stroke-width="17"/>
<path d="M85 500L130 570L210 640L260 700" stroke-width="12"/>
<path d="M95 530L115 505M125 590L135 545M150 620L165 570M180 640L195 585M205 650L222 600M110 540L150 575M140 600L130 590" stroke-width="14"/>
<!-- top-left flower -->
<path d="M245 360L250 330L280 310L300 330L345 325L360 400L385 430L380 480L320 525L250 540L220 430L240 385L290 365"/>
<path d="M295 330L285 370M345 330L320 390L330 430L310 460L300 400M360 400L335 440L345 480M250 540L245 440M260 530L275 490M270 530L310 490M280 520L340 490" stroke-width="7"/>
<path d="M215 480L250 540L245 640L270 690L250 720L240 800" stroke-width="7"/>
<path d="M240 570L262 650" stroke-width="5"/>
<path d="M225 760L280 720L300 680L345 670L400 720L400 790L370 830L320 850L240 830L225 760M260 720L290 715L310 740L340 700L345 740L380 750M240 770L265 830M280 755L295 830M320 780L310 840M360 800L320 845" stroke-width="7"/>
<path d="M320 860L310 960M190 845C200 880 220 910 240 925C240 885 210 850 190 845M250 910L300 860M265 920L295 880" stroke-width="7"/>
<path d="M265 1030C280 970 320 950 350 965C365 985 350 1005 265 1030M280 1010L335 975M240 1100L265 1030M240 1100L260 1203M310 1030L340 1203M350 1010L355 1203" stroke-width="8"/>
<path d="M275 1203L275 1120C295 1100 310 1150 325 1203M292 1130L305 1200" stroke-width="6"/>
<path d="M245 830L240 930L270 970" stroke-width="7"/>
<!-- sprigs -->
<path d="M115 900L110 1000L140 1130L190 1203" stroke-width="8"/>
<path d="M105 840C90 835 75 855 75 875C80 895 100 905 115 905C130 895 140 870 135 855C125 840 115 840 105 840M85 860L105 870L125 860L105 845" stroke-width="7"/>
<path d="M965 900L960 1000L930 1130L890 1203" stroke-width="8"/>
<path d="M965 840C950 835 935 855 935 875C940 895 960 905 975 905C990 895 1000 870 995 855C985 840 975 840 965 840M945 860L965 870L985 860L965 845" stroke-width="7"/>
<path d="M790 830L800 1000L790 1100L730 1203M860 830L830 950L800 1000M795 1100L760 1203" stroke-width="8"/>
</g>
<g transform="translate(590,560) scale(.33333)">
<use href="#lf" transform="translate(65 945) rotate(5)"/><use href="#lf" transform="translate(158 1000) rotate(5)"/><use href="#lf" transform="translate(72 1055)"/><use href="#lf" transform="translate(190 1115) scale(-1 1)"/><use href="#lf" transform="translate(130 1180) scale(-1 1)"/>
<use href="#lf" transform="translate(1010 945) scale(-1 1)"/><use href="#lf" transform="translate(915 1000) scale(-1 1)"/><use href="#lf" transform="translate(1003 1050) scale(-1 1)"/><use href="#lf" transform="translate(885 1115)"/><use href="#lf" transform="translate(950 1185)"/>
<use href="#lf" transform="translate(768 915) rotate(50) scale(.9)"/><use href="#lf" transform="translate(855 940) rotate(-30) scale(.7)"/><use href="#lf" transform="translate(628 715) rotate(-50) scale(.7)"/><use href="#lf" transform="translate(650 655) rotate(45) scale(.9)"/>
</g>
<g transform="translate(590,560) scale(.33333)" fill="none" stroke="#fff" stroke-width="6" stroke-linejoin="round">
<!-- upper right sprig -->
<path d="M802 12C790 50 800 80 810 90C818 60 812 30 802 12M782 110L820 160L860 170L875 125L850 140L830 82L815 115L830 150M790 165L850 235L860 170M790 270C810 240 840 232 860 240L855 280C830 280 800 280 790 270M820 255L850 260M860 310L885 260L885 320L870 320M695 260L720 300L735 250L750 305M690 320L745 325L720 345L690 320M710 300L750 320"/>
<!-- protea -->
<path d="M815 285C780 290 740 350 720 400C715 440 735 490 780 520L830 525C870 500 895 430 895 370C880 320 850 290 815 285Z" stroke-width="7"/>
<path d="M740 370L790 340L820 300L850 360L880 330M730 420L770 400L810 430L850 410L850 360M760 470L810 430L810 520M790 340L810 430M850 410L870 470M770 400L750 360M760 470L730 440M780 380L840 380M760 440L800 470L850 460M820 330L830 400M860 340L875 420" stroke-width="8"/>
<!-- right leaves between -->
<path d="M915 405C890 440 895 475 905 490C930 470 935 435 915 405M860 470L880 550L910 490L945 490L905 500L870 470M985 505L900 570C930 560 965 540 985 505M925 525L900 565" stroke-width="6"/>
<path d="M700 505C690 540 705 570 720 590C745 580 760 560 755 540C730 520 720 505 700 505M715 530L745 580" stroke-width="7"/>
<path d="M790 555C775 590 785 620 800 635C815 610 810 580 790 555M830 585C820 620 830 640 840 655C850 630 845 605 830 585M870 590L860 660L860 700M745 610C730 640 740 660 760 670C775 650 765 625 745 610" stroke-width="7"/>
<!-- dahlia 1 -->
<path d="M740 610L680 660L700 720L650 755L705 790L712 860L770 810L810 850L850 780L860 720L820 640L780 660Z" stroke-width="7"/>
<path d="M620 620L680 660L660 700L620 620" stroke-width="5"/>
<g stroke-width="9"><path d="M760 730L700 680M760 730L735 670M760 730L775 660M760 730L815 685M760 730L840 735M760 730L815 785M760 730L770 810M760 730L725 795M760 730L680 765M760 730L680 720M760 730L795 670M760 730L835 760"/></g>
<circle cx="760" cy="730" r="24" stroke-width="11"/><circle cx="760" cy="730" r="48" stroke-width="6" stroke-dasharray="9 6"/>
<!-- dahlia 2 -->
<path d="M895 600L950 575L1005 580L1020 640L1035 690L1030 760L985 810L930 800L900 820L880 780L860 690L875 620Z" stroke-width="7"/>
<g stroke-width="9"><path d="M950 690L950 600M950 690L1010 630M950 690L1025 690M950 690L1010 760M950 690L950 790M950 690L890 750M950 690L870 690M950 690L890 630M950 690L985 605M950 690L915 605M950 690L1025 725M950 690L1025 655M950 690L915 780M950 690L985 785M950 690L875 725M950 690L875 655"/></g>
<g stroke="#4b4b4b" stroke-width="7" stroke-dasharray="8 11"><circle cx="950" cy="690" r="28"/><circle cx="950" cy="690" r="48"/><circle cx="950" cy="690" r="68"/></g>
<path d="M860 700L870 770L900 820M820 840L830 900"/>
<path d="M800 810L790 860L800 900M820 810C810 840 820 870 830 880C840 860 835 830 820 810" stroke-width="7"/>
</g>

<!-- bottom scroll area -->
<rect x="207" y="961" width="1248" height="18" fill="#f0f0f0"/><rect x="207" y="979" width="1248" height="2" fill="#fff"/>
<rect x="201" y="981" width="1254" height="6" fill="#b6cfea"/><rect x="201" y="987" width="1254" height="1" fill="#18a8c8"/>
<path d="M219 965L215 969L219 973M574 965L578 969L574 973M607 965L603 969L607 973" fill="none" stroke="#aaa" stroke-width="1.800"/>
<rect x="590.500" y="961.500" width="6" height="17" fill="#f4f4f4" stroke="#777"/>

<!-- right side panels -->
<rect x="1455" y="102" width="225" height="888" fill="#fff"/><rect x="1455" y="102" width="1" height="888" fill="#d0d0d0"/>
<path d="M1458 106H1680" stroke="#bbb" stroke-width="2" stroke-dasharray="2 2.500"/>
<rect x="1456" y="110" width="224" height="54" fill="#f0f0f0"/><rect x="1456" y="164" width="224" height="1" fill="#a0a0a0"/>
<g fill="#b8d8f4" stroke="#90c8f4"><rect x="1456.500" y="110.500" width="27" height="25"/><rect x="1484.500" y="110.500" width="27" height="25"/><rect x="1512.500" y="110.500" width="27" height="25"/><rect x="1540.500" y="110.500" width="27" height="25"/><rect x="1568.500" y="110.500" width="27" height="25"/></g>
<g fill="none" stroke="#2d4a98" stroke-width="1.500">
<path d="M1462 115L1478 128L1478 130M1466 120L1470 114M1470 126L1478 124" />
<path d="M1496 132L1492 120Q1492 113 1500 113L1506 113Q1510 116 1510 126Q1510 132 1506 132" fill="#d0ddf4"/>
<path d="M1526 130V118A3 3 0 0 1 1532 118V130H1535" /><path d="M1546 118L1552 114H1558L1565 118L1563 124L1561 123V132H1548V123L1546 124Z" fill="#d0ddf4"/>
<path d="M1574 114H1584L1592 125V132" stroke="#c00" stroke-width="2.200"/>
<path d="M1610 114L1620 114L1628 125V130" stroke="#c00" stroke-width="2"/>
<path d="M1640 114L1648 114L1656 125V130" stroke="#c00" stroke-width="1.500"/>
<path d="M1657 116V134H1664V116ZM1660 116V134" stroke-width="1.200"/>
</g>
<use href="#br" x="1464" y="130" opacity=".6"/><use href="#br" x="1492" y="130" opacity=".6"/><use href="#br" x="1520" y="130" opacity=".6"/><use href="#br" x="1548" y="130" opacity=".6"/><use href="#br" x="1580" y="126"/><use href="#br" x="1609" y="122"/><use href="#br" x="1637" y="122"/><use href="#br" x="1670" y="124" opacity=".7"/>
<rect x="1459" y="140" width="20" height="20" fill="#e8e8e8"/><path d="M1460 144H1479M1460 148H1479M1460 152H1479M1460 156H1479" stroke="#666" stroke-width="1.800"/><path d="M1479.500 140V160" stroke="#999"/>
<path d="M1667 157H1669M1670 157H1672M1673 157H1675" stroke="#777"/>

<!-- panel 2 knitting -->
<rect x="1456" y="200" width="224" height="1" fill="#a0a0a0"/><rect x="1456" y="201" width="224" height="251" fill="#f0f0f0"/><rect x="1456" y="452" width="224" height="1" fill="#a0a0a0"/>
<path d="M1458 205H1680" stroke="#bbb" stroke-width="2" stroke-dasharray="2 2.500"/>
<g>
<!-- R1 -->
<g transform="translate(1469,222)"><use href="#ll"/><use href="#d" x="0" y="-7"/><use href="#drd" x="6" y="-6"/></g>
<g transform="translate(1497,222)"><use href="#lu" x="-3"/><use href="#d" x="-7" y="6"/><use href="#ugd" x="6" y="-3"/></g>
<g transform="translate(1525,222)"><use href="#lv"/><use href="#d" x="0" y="-7"/><use href="#drd" x="7" y="-4"/></g>
<g transform="translate(1553,222)"><use href="#ln" x="-2"/><use href="#d" x="-7" y="6"/><use href="#ugd" x="6" y="-2"/></g>
<g transform="translate(1582,222)"><use href="#ll"/><use href="#d" y="-7"/></g><g transform="translate(1609,222)"><use href="#lu"/><use href="#d" x="-5" y="6"/></g>
<g transform="translate(1638,222)"><use href="#lv"/><use href="#d" y="-7"/></g><g transform="translate(1666,222)"><use href="#ln"/><use href="#d" x="-4" y="6"/></g>
<!-- R2 -->
<use href="#sw" x="1469" y="248"/>
<g transform="translate(1497,248)"><use href="#wv"/><circle cx="-8" cy="8" r="4" fill="none" stroke="#000" stroke-width="1.300"/></g>
<g transform="translate(1525,248)"><path d="M-11 0C-6 0 -5 9 -1 9C3 9 3 0 11 -1" stroke="#000" stroke-width="1.800" fill="none"/><circle cx="4" cy="-6" r="4" fill="none" stroke="#000" stroke-width="1.300"/></g>
<use href="#wv" x="1553" y="248"/>
<g transform="translate(1582,248)"><path d="M-11 0H11" stroke="#000" stroke-width="2"/><use href="#d" x="-8" y="-6"/><use href="#d" x="-8" y="6"/><use href="#drd" x="4" y="-5"/></g>
<g transform="translate(1609,248)"><path d="M-11 0H11" stroke="#000" stroke-width="2"/><use href="#d" x="-8" y="-6"/><use href="#d" x="-8" y="6"/><use href="#ugd" x="4" y="-1"/></g>
<g transform="translate(1638,248)"><path d="M-11 0H11" stroke="#000" stroke-width="2"/><use href="#d" y="-6"/><use href="#d" y="6"/></g>
<g transform="translate(1666,248)"><path d="M-6 -1L7 10M7 -1L-6 10" stroke="#e02020" stroke-width="2.500"/><use href="#d" y="-8"/></g>
<!-- R3 -->
<g transform="translate(1469,274)"><use href="#ll"/><path d="M-4 0L-1 -7L2 0" fill="none" stroke="#000"/><use href="#drd" x="7" y="-4"/></g>
<g transform="translate(1497,274)"><use href="#lu" x="-3"/><path d="M-8 4L-5 10L-2 4" fill="none" stroke="#000"/><use href="#ugd" x="6" y="-2"/></g>
<g transform="translate(1525,274)"><use href="#ll"/><path d="M-4 0L0 -7L4 0" fill="none" stroke="#000"/></g>
<g transform="translate(1553,274)"><use href="#lu"/><path d="M-6 4L-3 10L0 4" fill="none" stroke="#000"/></g>
<use href="#ug" x="1582" y="273"/><use href="#dr" x="1609" y="273"/><use href="#ugd" x="1638" y="272"/><use href="#drd" x="1666" y="272"/>
<!-- R4 bent arrows -->
<g fill="none" stroke-width="4">
<path d="M1464 309V295H1474" stroke="#b0b0b0"/><path d="M1476 289L1482 295L1476 301Z" fill="#b0b0b0" stroke="none"/>
<path d="M1502 309V295H1492" stroke="#888"/><path d="M1492 289L1486 295L1492 301Z" fill="#888" stroke="none"/>
<path d="M1520 309V295H1530" stroke="#c0c0c0" stroke-dasharray="3 1.500"/><path d="M1530 289L1536 295L1530 301Z" fill="#c0c0c0" stroke="none"/>
<path d="M1559 309V295H1549" stroke="#aaa" stroke-dasharray="3 1.500"/><path d="M1548 289L1542 295L1548 301Z" fill="#aaa" stroke="none"/>
<path d="M1591 294H1579V304" stroke="#888"/><path d="M1573 304L1579 309L1585 304Z" fill="#888" stroke="none"/>
<path d="M1601 294H1613V304" stroke="#bbb"/><path d="M1607 304L1613 309L1619 304Z" fill="#bbb" stroke="none"/>
<path d="M1647 294H1635V304" stroke="#999" stroke-dasharray="3 1.500"/><path d="M1629 304L1635 309L1641 304Z" fill="#999" stroke="none"/>
<path d="M1658 294H1669V304" stroke="#ccc" stroke-dasharray="3 1.500"/><path d="M1663 304L1669 309L1675 304Z" fill="#ccc" stroke="none"/>
</g>
<!-- R5 hooks -->
<g transform="translate(1469,328)"><use href="#hk"/><use href="#d" x="6" y="-9"/></g>
<g transform="translate(1497,324)"><use href="#hkd"/><use href="#d" x="-6" y="8"/></g>
<g transform="translate(1519,330)"><use href="#hk"/></g><g transform="translate(1530,323)"><use href="#hkd"/></g>
<g transform="translate(1553,330)"><use href="#lo" y="4" transform="rotate(180)"/><use href="#d" x="0" y="-10"/></g>
<g transform="translate(1582,326)"><use href="#lo"/><use href="#d" x="-4" y="6"/></g>
<use href="#lo" x="1604" y="333" transform="rotate(180 1604 333)"/><use href="#lo" x="1612" y="322"/>
<g transform="translate(1632,330)"><use href="#hk"/></g><use href="#lo" x="1642" y="322"/>
<use href="#lo" x="1660" y="333" transform="rotate(180 1660 333)"/><g transform="translate(1669,322)"><use href="#hkd"/></g>
<!-- R6 -->
<g transform="translate(1467,354)"><use href="#hkr"/><use href="#d" x="7" y="-8"/></g>
<g transform="translate(1497,350)"><use href="#hkrd"/><use href="#d" x="-6" y="9"/></g>
<use href="#hkr" x="1520" y="356"/><use href="#hkrd" x="1530" y="349"/>
<text x="1543" y="351" style="font-size:12px;font-weight:bold;fill:#3f6ec0;font-family:'Liberation Serif',serif">L0</text><text x="1543" y="365" style="font-size:12px;font-weight:bold;fill:#3f6ec0;font-family:'Liberation Serif',serif">L1</text>
<path d="M1561 346L1564 342L1567 346ZM1561 361L1564 365L1567 361Z" fill="#d00"/><path d="M1564 346V361" stroke="#d00" stroke-width="2" stroke-dasharray="2 1"/>
<g transform="translate(1582,352)"><use href="#ll"/><use href="#d" y="-7"/><use href="#ugd" x="6" y="-3"/></g>
<g transform="translate(1609,352)"><use href="#lu"/><use href="#d" x="-5" y="6"/><use href="#drd" x="6" y="-4"/></g>
<g transform="translate(1638,352)"><use href="#sw"/><use href="#ugd" x="6" y="-3"/></g>
<g transform="translate(1666,352)"><use href="#sw"/><use href="#drd" x="6" y="-4"/></g>
<!-- R7 -->
<g transform="translate(1469,378)"><use href="#ln"/><circle cx="-6" cy="6" r="4" fill="none" stroke="#000" stroke-width="1.300"/><use href="#ugd" x="7" y="-2"/></g>
<g transform="translate(1497,378)"><use href="#lv"/><circle cx="1" cy="-6" r="4" fill="none" stroke="#000" stroke-width="1.300"/><use href="#drd" x="7" y="-2"/></g>
<g transform="translate(1525,378)"><path d="M-11 0H11" stroke="#000" stroke-width="2"/><use href="#ug"/></g>
<g transform="translate(1553,378)"><path d="M-11 0H11" stroke="#000" stroke-width="2"/><use href="#dr"/></g>
<g transform="translate(1582,378)"><path d="M-11 0H11" stroke="#000" stroke-width="2"/><use href="#ug" x="-3"/><use href="#drd" x="7" y="-2"/></g>
<g transform="translate(1609,378)"><path d="M-11 0H11" stroke="#000" stroke-width="2"/><use href="#dr" x="-3"/><use href="#ugd" x="7" y="-2"/></g>
<g transform="translate(1638,378)"><path d="M-11 0H11" stroke="#000" stroke-width="2" stroke-dasharray="7 4"/><use href="#hk" x="-2" y="4"/><use href="#d" x="4" y="-6"/></g>
<g transform="translate(1666,378)"><path d="M-11 0H11" stroke="#000" stroke-width="2" stroke-dasharray="8 3"/><use href="#hkd" x="1" y="-4"/><use href="#d" x="-5" y="7"/></g>
<!-- R8 -->
<g fill="none" stroke="#333" stroke-width="1.200"><circle cx="1469" cy="403" r="7.500"/><circle cx="1469" cy="403" r="4"/><circle cx="1497" cy="403" r="7.500"/><circle cx="1525" cy="403" r="7.500"/><path d="M1525 397L1527 401L1531 401L1528 404L1529 408L1525 406L1521 408L1522 404L1519 401L1523 401Z"/><circle cx="1553" cy="403" r="7.500" stroke-width="1.800"/><path d="M1548 408L1558 398"/></g><circle cx="1497" cy="403" r=".8" fill="#333"/>
<!-- R9 -->
<g fill="none" stroke="#5a1aa8" stroke-width="1.300"><path d="M1463 431H1467V424A3 3 0 0 1 1473 424V431H1476"/><path d="M1506 438H1510V430A3 3 0 0 1 1516 430V438H1520"/></g><rect x="1461" y="435" width="19" height="4" fill="#aaa"/><rect x="1504" y="421" width="19" height="4" fill="#aaa"/>
<g fill="none" stroke="#888" stroke-width="1.100"><path d="M1549 432V424A2.500 2.500 0 0 1 1554 424V432H1558V427A3 3 0 0 1 1564 430V433"/><rect x="1547.500" y="435.500" width="18" height="3"/><path d="M1591 438V430A2.500 2.500 0 0 1 1596 430V438H1600V433A3 3 0 0 1 1606 436V438"/><rect x="1590.500" y="421.500" width="18" height="3"/></g>
<use href="#car" x="1491" y="429"/><use href="#car" x="1534" y="429"/><use href="#cag" x="1577" y="429"/><use href="#cag" x="1620" y="429"/>
</g>

<!-- panel 3 -->
<rect x="1456" y="462" width="224" height="1" fill="#a0a0a0"/><rect x="1456" y="463" width="224" height="5" fill="#fff"/><rect x="1456" y="471" width="224" height="250" fill="#f0f0f0"/>
<path d="M1458 467H1680" stroke="#bbb" stroke-width="2" stroke-dasharray="2 2.500"/>
<rect x="1456.500" y="471.500" width="27" height="26" fill="#b8d8f4" stroke="#90c8f4"/><rect x="1652.500" y="471.500" width="27" height="26" fill="#b8d8f4" stroke="#90c8f4"/>
<path d="M1463 492L1465 479Q1470 473 1475 479L1478 492Z" fill="url(#rb)"/>
<path d="M1494 478H1508V484H1494ZM1501 484V494" fill="#c03030" stroke="#2d4a98" stroke-width="1.500"/><path d="M1506 474L1512 476H1505" stroke="#6a8ac8" stroke-width="2" fill="none"/>
<path d="M1602 491L1604 478Q1609 473 1615 478L1618 491Z" fill="url(#rb)"/><text x="1601" y="498" style="font-size:11px;font-weight:bold;fill:#2d4a98" textLength="19" lengthAdjust="spacingAndGlyphs">MG</text>
<path d="M1630 491L1632 478Q1637 473 1643 478L1646 491Z" fill="url(#rb)"/><text x="1639" y="498" style="font-size:15px;font-weight:bold;fill:#2d4a98" >T</text>
<path d="M1660 478H1672V484H1660Z" fill="#c03030" stroke="#2d4a98" stroke-width="1.300"/><path d="M1666 484V494" stroke="#2d4a98" stroke-width="1.500"/><path d="M1664 490H1668L1666 495Z" fill="#d09020"/>
<rect x="1458" y="500" width="222" height="1" fill="#a8a8a8"/>
<!-- swatches -->
<g stroke="#3f5aa8" stroke-width="1.200">
<rect x="1459.500" y="509.500" width="14" height="14" fill="#fff"/><rect x="1487.500" y="509.500" width="14" height="14" fill="#4b4b4b"/><rect x="1515.500" y="509.500" width="14" height="14" fill="#0000ff"/><rect x="1543.500" y="509.500" width="14" height="14" fill="#00ff55"/>
<rect x="1459.500" y="536.500" width="14" height="14" fill="#a04a00"/><rect x="1487.500" y="536.500" width="14" height="14" fill="#f000f0"/><rect x="1515.500" y="536.500" width="14" height="14" fill="#ff0000"/><rect x="1543.500" y="536.500" width="14" height="14" fill="#f09600"/>
<rect x="1459.500" y="563.500" width="14" height="14" fill="#908c00"/><rect x="1487.500" y="563.500" width="14" height="14" fill="#40e8ff"/><rect x="1515.500" y="563.500" width="14" height="14" fill="#f0f000"/><rect x="1543.500" y="563.500" width="14" height="14" fill="#b400b4"/>
<rect x="1459.500" y="590.500" width="14" height="14" fill="#98ff98"/><rect x="1487.500" y="590.500" width="14" height="14" fill="#969696"/><rect x="1515.500" y="590.500" width="14" height="14" fill="#780082"/><rect x="1543.500" y="590.500" width="14" height="14" fill="#a00064"/>
<rect x="1459.500" y="617.500" width="14" height="14" fill="#786878"/><rect x="1487.500" y="617.500" width="14" height="14" fill="#500050"/><rect x="1515.500" y="617.500" width="14" height="14" fill="#280a78"/><rect x="1543.500" y="617.500" width="14" height="14" fill="#508c50"/>
<rect x="1459.500" y="644.500" width="14" height="14" fill="#962d50"/><rect x="1487.500" y="644.500" width="14" height="14" fill="#c81e96"/><rect x="1515.500" y="644.500" width="14" height="14" fill="#6e6eff"/><rect x="1543.500" y="644.500" width="14" height="14" fill="#ff6e14"/>
<rect x="1459.500" y="671.500" width="14" height="14" fill="#eeeadc"/><rect x="1487.500" y="671.500" width="14" height="14" fill="#780046"/><rect x="1515.500" y="671.500" width="14" height="14" fill="#7d7d8c"/><rect x="1543.500" y="671.500" width="14" height="14" fill="#555055"/>
<rect x="1459.500" y="698.500" width="14" height="14" fill="#003c00"/><rect x="1487.500" y="698.500" width="14" height="14" fill="#003c7d"/><rect x="1515.500" y="698.500" width="14" height="14" fill="#fadc82"/><rect x="1543.500" y="698.500" width="14" height="14" fill="#afc8c8"/>
<!-- pockets -->
<use href="#pk" x="1583" y="517" fill="#008c8c"/><use href="#pk" x="1609" y="517" fill="#00c0c8"/><use href="#pk" x="1639" y="517" fill="#00ffff"/><use href="#pk" x="1664" y="517" fill="#c8ffff"/>
<use href="#pk" x="1583" y="544" fill="#8c8c00"/><use href="#pk" x="1609" y="544" fill="#c8c000"/><use href="#pk" x="1639" y="544" fill="#ffff00"/><use href="#pk" x="1664" y="544" fill="#ffffc8"/>
<use href="#pk" x="1583" y="571" fill="#780078"/><use href="#pk" x="1609" y="571" fill="#b000b0"/><use href="#pk" x="1639" y="571" fill="#ff00ff"/><use href="#pk" x="1664" y="571" fill="#ffb0ff"/>
<use href="#pk" x="1583" y="598" fill="#000078"/><use href="#pk" x="1609" y="598" fill="#0000b4"/><use href="#pk" x="1639" y="598" fill="#0000ff"/><use href="#pk" x="1664" y="598" fill="#a0a0ff"/>
<use href="#pk" x="1583" y="625" fill="#008c00"/><use href="#pk" x="1609" y="625" fill="#00c000"/><use href="#pk" x="1639" y="625" fill="#00ff00"/><use href="#pk" x="1664" y="625" fill="#c0ffc0"/>
<use href="#pk" x="1583" y="652" fill="#8c0000"/><use href="#pk" x="1609" y="652" fill="#c00000"/><use href="#pk" x="1639" y="652" fill="#ff0000"/><use href="#pk" x="1664" y="652" fill="#ffa0a0"/>
<use href="#pk" x="1583" y="679" fill="#8c4600"/><use href="#pk" x="1609" y="679" fill="#c06400"/><use href="#pk" x="1639" y="679" fill="#ff8000"/><use href="#pk" x="1664" y="679" fill="#ffc896"/>
<use href="#pk" x="1583" y="706" fill="#323232"/><use href="#pk" x="1609" y="706" fill="#5f5f5f"/><use href="#pk" x="1639" y="706" fill="#8c8c8c"/><use href="#pk" x="1664" y="706" fill="#c3c3c3"/>
</g>
<path d="M1591.500 507V528M1599.500 507V528M1647.500 507V528M1655.500 507V528M1591.500 534V555M1599.500 534V555M1647.500 534V555M1655.500 534V555M1591.500 561V582M1599.500 561V582M1647.500 561V582M1655.500 561V582M1591.500 588V609M1599.500 588V609M1647.500 588V609M1655.500 588V609M1591.500 615V636M1599.500 615V636M1647.500 615V636M1655.500 615V636M1591.500 642V663M1599.500 642V663M1647.500 642V663M1655.500 642V663M1591.500 669V690M1599.500 669V690M1647.500 669V690M1655.500 669V690M1591.500 696V717M1599.500 696V717M1647.500 696V717M1655.500 696V717" stroke="#3f5aa8"/>
<g>
<text class="n" x="1570" y="516">8</text><text class="n" x="1616" y="516">8</text><text class="r" x="1627" y="516">16</text><text class="r" x="1668" y="516">16</text>
<text class="n" x="1570" y="543">7</text><text class="n" x="1616" y="543">7</text><text class="r" x="1627" y="543">15</text><text class="r" x="1668" y="543">15</text>
<text class="n" x="1570" y="570">6</text><text class="n" x="1616" y="570">6</text><text class="r" x="1627" y="570">14</text><text class="r" x="1668" y="570">14</text>
<text class="n" x="1570" y="597">5</text><text class="n" x="1616" y="597">5</text><text class="r" x="1627" y="597">13</text><text class="r" x="1668" y="597">13</text>
<text class="n" x="1570" y="624">4</text><text class="n" x="1616" y="624">4</text><text class="r" x="1627" y="624">12</text><text class="r" x="1668" y="624">12</text>
<text class="n" x="1570" y="651">3</text><text class="n" x="1616" y="651">3</text><text class="r" x="1627" y="651">11</text><text class="r" x="1668" y="651">11</text>
<text class="n" x="1570" y="678">2</text><text class="n" x="1616" y="678">2</text><text class="r" x="1627" y="678">10</text><text class="r" x="1668" y="678">10</text>
<text class="n" x="1570" y="705">1</text><text class="n" x="1616" y="705">1</text><text class="r" x="1627" y="705">9</text><text class="r" x="1668" y="705">9</text>
</g>
<rect x="1456" y="720" width="224" height="1" fill="#a0a0a0"/>

<!-- panel 4 -->
<rect x="1456" y="733" width="224" height="1" fill="#a0a0a0"/><rect x="1456" y="739" width="224" height="56" fill="#f0f0f0"/><rect x="1456" y="795" width="224" height="1" fill="#a0a0a0"/>
<path d="M1458 737H1680" stroke="#bbb" stroke-width="2" stroke-dasharray="2 2.500"/>
<rect x="1456.500" y="741.500" width="27" height="25" fill="#b8d8f4" stroke="#90c8f4"/><rect x="1456.500" y="768.500" width="27" height="25" fill="#b8d8f4" stroke="#90c8f4"/><rect x="1512.500" y="741.500" width="27" height="25" fill="#b8d8f4" stroke="#90c8f4"/>
<path d="M1462 750L1466 746L1470 748H1472L1476 746L1480 750L1477 754V763H1463V754Z" fill="none" stroke="#1820c0" stroke-width="2"/><path d="M1462 750L1466 746L1469 748M1478 750L1474 746L1471 748" stroke="#c02020" stroke-width="2" fill="none"/>
<path d="M1462 776L1466 773H1474L1478 776M1463 780H1477M1464 783H1476M1464 786H1476M1464 789H1476" stroke="#1820c0" stroke-width="1.800" fill="none"/>
<g fill="#40c060" stroke="#1a7030"><rect x="1489" y="750" width="8" height="5"/><rect x="1497" y="750" width="8" height="5"/><rect x="1493" y="755" width="8" height="5"/><path d="M1519 762L1521 749Q1526 744 1531 749L1534 762Z" fill="#7ad890"/></g>
<path d="M1544 761H1562V766H1544Z" fill="#309040"/><path d="M1549 760V752A3 3 0 0 1 1555 752V760" fill="none" stroke="#1a7030" stroke-width="1.300"/>
<rect x="1572" y="745" width="19" height="7" fill="#58b878"/><path d="M1574 763V752A3 3 0 0 1 1580 752V763H1584V756A3 3 0 0 1 1590 758V762" fill="none" stroke="#1a7030" stroke-width="1.300"/>
<path d="M1602 746H1616M1609 746V762M1606 746V752H1612V746M1606 758L1609 763L1612 758" fill="none" stroke="#999" stroke-width="1.500"/>
<path d="M1631 746L1640 757L1647 756M1640 757L1644 764" fill="none" stroke="#aaa" stroke-width="1.500"/>
<rect x="1658" y="746" width="10" height="16" fill="none" stroke="#888"/><path d="M1661 746V762M1665 746V762" stroke="#aaa"/><path d="M1673 746V753M1673 755V762" stroke="#888"/>
<path d="M1489 780H1505" stroke="#1a7030" stroke-width="1.800"/><circle cx="1497" cy="784" r="3.500" fill="none" stroke="#1a7030" stroke-width="1.300"/><path d="M1517 780H1533" stroke="#1a7030" stroke-width="1.800"/><circle cx="1525" cy="784" r="3.500" fill="none" stroke="#1a7030" stroke-width="1.300"/>
<rect x="1545" y="773" width="16" height="8" fill="#e800e0"/><rect x="1545" y="781" width="16" height="8" fill="#98ff98"/><path d="M1551 775L1548 777L1551 779M1556 775L1553 777L1556 779M1550 783L1553 785L1550 787M1555 783L1558 785L1555 787" fill="none" stroke="#111"/>
<path d="M1574 788L1577 775Q1582 770 1587 775L1590 788Z" fill="#f0e020" stroke="#1a7030"/><path d="M1575 786L1585 772L1589 786Z" fill="#2050d0" opacity=".8"/><path d="M1577 780L1584 772" stroke="#e03030" stroke-width="3"/><path d="M1581 787L1589 778" stroke="#30b030" stroke-width="3"/>
<use href="#sh" x="1609" y="782" fill="#8fd89a" stroke="#1a7030"/><path d="M1603 772V776M1615 772V776" stroke="#1a7030" stroke-width="1.500"/>
<use href="#sh" x="1637" y="782" fill="#8fd89a" stroke="#1a7030"/><path d="M1628 773H1634M1640 773H1646" stroke="#1a7030" stroke-width="1.500"/>
<rect x="1658" y="773" width="11" height="13" fill="none" stroke="#888"/><path d="M1658 776H1669M1658 779H1669M1658 782H1669" stroke="#888"/><path d="M1673 772V779M1673 781V788" stroke="#888"/>

<!-- panel 5 -->
<rect x="1456" y="803" width="224" height="1" fill="#a0a0a0"/><rect x="1456" y="811" width="224" height="55" fill="#f0f0f0"/><rect x="1456" y="866" width="224" height="1" fill="#a0a0a0"/>
<path d="M1458 808H1680" stroke="#bbb" stroke-width="2" stroke-dasharray="2 2.500"/>
<rect x="1456.500" y="812.500" width="27" height="25" fill="#b8d8f4" stroke="#90c8f4"/><rect x="1460" y="819" width="16" height="15" fill="#b08060" stroke="#555"/>
<use href="#sh" x="1495" y="827" fill="#fff" stroke="#ddd"/><use href="#sh" x="1524" y="827" fill="#f0d890" stroke="#c8a030"/><use href="#sh" x="1552" y="827" fill="#b8d0d8" stroke="#70a0a8"/><use href="#sh" x="1580" y="827" fill="#fff" stroke="#ccc"/><use href="#sh" x="1604" y="827" fill="#fff" stroke="#ccc"/><use href="#sh" x="1614" y="827" fill="#fff" stroke="#ccc"/><use href="#sh" x="1632" y="827" fill="#fff" stroke="#ccc"/><use href="#sh" x="1642" y="827" fill="#fff" stroke="#ccc"/>
<use href="#sh" x="1465" y="853" fill="#dfe6f4" stroke="#3f5aa8" stroke-width="1.500"/><path d="M1470 856L1478 862M1478 852L1472 862" stroke="#3f5aa8" stroke-width="1.300"/>
<rect x="1487" y="854" width="11" height="9" fill="#4a6cc0"/><path d="M1497 850L1503 845L1509 850H1506V862H1500V850Z" fill="#fff" stroke="#3f5aa8"/><path d="M1506 843H1514M1506 848H1514M1506 853H1514M1506 858H1514M1506 862H1514" stroke="#4a6cc0" stroke-width="1.500"/>
<g><circle cx="1525" cy="853" r="7" fill="none" stroke="#50a0c0" stroke-width="4.500"/><circle cx="1525" cy="853" r="10" fill="none" stroke="#50a0c0" stroke-width="3" stroke-dasharray="3 2.500"/>
<circle cx="1554" cy="853" r="7" fill="none" stroke="#bbb" stroke-width="4.500"/><circle cx="1554" cy="853" r="10" fill="none" stroke="#bbb" stroke-width="3" stroke-dasharray="3 2.500"/><path d="M1547 856L1551 861L1558 850" fill="none" stroke="#555" stroke-width="2"/>
<circle cx="1580" cy="853" r="7" fill="none" stroke="#50a0c0" stroke-width="4.500"/><circle cx="1580" cy="853" r="10" fill="none" stroke="#50a0c0" stroke-width="3" stroke-dasharray="3 2.500"/>
<circle cx="1609" cy="853" r="7" fill="none" stroke="#bbb" stroke-width="4.500"/><circle cx="1609" cy="853" r="10" fill="none" stroke="#bbb" stroke-width="3" stroke-dasharray="3 2.500"/><path d="M1602 856L1606 861L1613 850" fill="none" stroke="#555" stroke-width="2"/></g>
<text x="1585" y="863" style="font-size:10px;font-weight:bold;fill:#d01020">2</text><text x="1613" y="863" style="font-size:10px;font-weight:bold;fill:#666">2</text>
<path d="M1656 855L1666 845L1676 855L1666 865Z" fill="#fff" stroke="#333" stroke-width="1.200"/><path d="M1664 860V848L1670 844V855M1667 858V846L1673 843V852" fill="none" stroke="#555"/>

<!-- panel 6 -->
<path d="M1456 873.500H1576V908.500H1456" fill="#f0f0f0" stroke="#a0a0a0"/><rect x="1456" y="875" width="120" height="5" fill="#fff"/><path d="M1458 877H1574" stroke="#bbb" stroke-width="2" stroke-dasharray="2 2.500"/>
<g stroke="#e03030"><path d="M1472 885H1479M1472 888H1479M1472 891H1479M1472 894H1479M1472 897H1479M1472 900H1479" stroke-width="1.800"/><path d="M1500 885H1507M1500 888H1507M1500 891H1507M1500 894H1507M1500 897H1507M1500 900H1507" stroke-width="1.800"/><path d="M1529 885H1536M1529 888H1536M1529 891H1536M1529 894H1536M1529 897H1536M1529 900H1536" stroke-width="1.800"/></g>
<path d="M1460 899H1470V903H1460Z" fill="#3f5aa8"/><path d="M1488 898H1497V903H1488Z" fill="#3f5aa8"/><rect x="1488" y="896" width="7" height="6" fill="#fff" stroke="#e03030" stroke-dasharray="1.500 1"/><rect x="1515" y="894" width="11" height="9" fill="#ff2020"/>
<path d="M1463 891L1470 885L1477 891H1474V898H1466V891Z" fill="#fff" stroke="#c03030"/><path d="M1491 891L1498 885L1505 891H1502V896H1494V891Z" fill="#fff" stroke="#c03030"/><path d="M1520 891L1527 885L1534 891H1531V896H1523V891Z" fill="#fff" stroke="#c03030"/>
<path d="M1459 899Q1464 894 1469 899Q1464 903 1459 899" fill="#fff" stroke="#333"/>
<rect x="1542" y="883" width="1" height="23" fill="#999"/>
<path d="M1552 902V890L1555 887L1558 890V902M1562 902V890L1565 887L1568 890V902M1558 890L1562 890M1552 885H1556M1564 885H1570" fill="none" stroke="#aaa" stroke-width="1.300"/>

<!-- status bar -->
<rect x="0" y="988" width="1680" height="2" fill="#ccc"/><rect x="0" y="990" width="1680" height="20" fill="#f0f0f0"/><rect x="0" y="989" width="1680" height="1" fill="#a8a8a8"/>
<text x="4" y="1006" textLength="209" lengthAdjust="spacingAndGlyphs">No needle action [&gt; 1 ^ 1] within shape</text>
<text x="1197" y="1006" textLength="131" lengthAdjust="spacingAndGlyphs">NP 5 = 12.0 - NP 6 = 12.0</text>
<text x="1367" y="1006" textLength="25" lengthAdjust="spacingAndGlyphs">#256</text>
<rect x="1400" y="994" width="16" height="15" fill="#000"/>
<rect x="1427" y="994" width="18" height="15" fill="#dcdcdc"/><path d="M1430 995H1442M1430 1008H1442M1436 995V1008" stroke="#000" stroke-width="1.800"/>
<text x="1529" y="1006" textLength="26" lengthAdjust="spacingAndGlyphs">&gt;353</text>
<text x="1588" y="1006" textLength="57" lengthAdjust="spacingAndGlyphs">^203&#160;&#160;^203</text>
<path d="M1192.500 992V1009M1360.500 992V1009M1421.500 992V1009M1475.500 992V1009M1514.500 992V1009M1582.500 992V1009M1660.500 992V1009" stroke="#d8d8d8"/>
<path d="M1672 1007H1674M1675 1007H1677M1675 1004H1677M1678 1007H1680M1678 1004H1680M1678 1001H1680" stroke="#aaa"/>

<!-- taskbar -->
<rect x="0" y="1010" width="1680" height="40" fill="url(#dk)"/>
<rect x="48" y="1010" width="344" height="40" fill="#f0f0f0"/><rect x="48" y="1010" width="344" height="1" fill="#aaa"/>
<g fill="#fff"><rect x="16" y="1024" width="7.500" height="7"/><rect x="24.500" y="1023" width="8.500" height="8"/><rect x="16" y="1032" width="7.500" height="7"/><rect x="24.500" y="1032" width="8.500" height="8"/></g>
<circle cx="70" cy="1028" r="5.500" fill="none" stroke="#222" stroke-width="1.200"/><path d="M66 1032L60 1039" stroke="#222" stroke-width="1.300"/>
<text x="88" y="1036" style="font-size:15px;fill:#333" textLength="127" lengthAdjust="spacingAndGlyphs">Type here to search</text>
<!-- folder -->
<path d="M408 1022H415L417 1025H430V1043H408Z" fill="#f4c84a"/><path d="M414 1043V1035L419 1031L424 1035V1043H421V1037H417V1043Z" fill="#3c88d8"/>
<!-- outlook -->
<rect x="462" y="1020" width="18" height="22" fill="#1468c0"/><rect x="476" y="1025" width="9" height="17" fill="#2f90e8"/><rect x="456" y="1025" width="14" height="14" fill="#0f5fb8"/><text x="459" y="1036" style="font-size:11px;font-weight:bold;fill:#fff">O</text>
<!-- notepad -->
<rect x="506" y="1020" width="19" height="25" fill="#eef2e0" stroke="#555"/><rect x="507" y="1037" width="17" height="8" fill="#40b040"/><path d="M511 1030V1036M514 1030V1036M518 1031H522" stroke="#333"/><path d="M520 1036L528 1018" stroke="#e0a030" stroke-width="2.500"/>
<!-- scanner -->
<path d="M555 1030L565 1022L576 1024L572 1030Z" fill="#888"/><path d="M554 1032H578L574 1039H560Z" fill="#333"/><path d="M556 1031H577" stroke="#6ad" stroke-width="1"/>
<!-- bug/globe -->
<ellipse cx="616" cy="1030" rx="10" ry="13" fill="#b89a20"/><path d="M609 1024L623 1036M623 1024L609 1036" stroke="#f0d050" stroke-width="2"/><circle cx="616" cy="1030" r="3" fill="#333"/>
<!-- chrome x2 -->
<g id="chr"><circle cx="664" cy="1031" r="11.500" fill="#e04030"/><path d="M664 1031L673 1040A11.500 11.500 0 0 1 656 1039.300L652.500 1031Z" fill="#34a853"/><path d="M664 1031L668 1019.500A11.500 11.500 0 0 1 673 1040Z" fill="#fbbc05"/><circle cx="664" cy="1031" r="5.500" fill="#4285f4" stroke="#fff" stroke-width="2"/></g>
<use href="#chr" x="146"/>
<!-- word -->
<rect x="708" y="1020" width="17" height="23" fill="#2b5cb8"/><rect x="701" y="1025" width="14" height="13" fill="#184a9c"/><text x="703" y="1036" style="font-size:11px;font-weight:bold;fill:#fff">W</text><path d="M716 1026H724M716 1031H724M716 1036H724" stroke="#7aa0e0"/>
<!-- excel -->
<rect x="757" y="1020" width="17" height="23" fill="#21a366"/><rect x="765" y="1026" width="9" height="11" fill="#0f7a45"/><rect x="750" y="1025" width="13" height="13" fill="#107c41"/><text x="753" y="1036" style="font-size:11px;font-weight:bold;fill:#fff">X</text>
<!-- pdf -->
<rect x="849" y="1019" width="21" height="24" rx="1" fill="#c4120e"/><path d="M853 1038C858 1034 860 1026 859 1023C860 1030 864 1034 868 1035C863 1034 857 1036 853 1038Z" fill="none" stroke="#fff" stroke-width="1.200"/>
<!-- teams -->
<rect x="896" y="1023" width="14" height="15" rx="1" fill="#5558af"/><text x="900" y="1035" style="font-size:11px;font-weight:bold;fill:#fff">T</text><circle cx="911" cy="1023" r="3" fill="#7b83eb"/><path d="M908 1027H917V1040L912 1043L908 1038Z" fill="#7b83eb"/><circle cx="917" cy="1039" r="5" fill="#d01030" stroke="#fff" stroke-width=".7"/>
<!-- app -->
<rect x="934" y="1010" width="48" height="40" fill="#3e4144"/>
<rect x="946" y="1019" width="24" height="25" fill="#45473f" stroke="#999"/><rect x="948" y="1020" width="5" height="6" fill="#a0e0f0"/><rect x="963" y="1020" width="5" height="6" fill="#3090f0"/><rect x="949" y="1028" width="5" height="6" fill="#e8e020"/><rect x="956" y="1025" width="5" height="6" fill="#30b030"/><rect x="961" y="1030" width="5" height="6" fill="#e8b020"/><rect x="954" y="1037" width="5" height="5" fill="#d08040"/><rect x="960" y="1039" width="5" height="5" fill="#d03030"/><rect x="965" y="1039" width="4" height="5" fill="#30a030"/>
<!-- running bars -->
<g fill="#76b9ed"><rect x="447" y="1048" width="40" height="2"/><rect x="692" y="1048" width="40" height="2"/><rect x="742" y="1048" width="40" height="2"/><rect x="791" y="1048" width="40" height="2"/><rect x="840" y="1048" width="40" height="2"/><rect x="889" y="1048" width="39" height="2"/><rect x="934" y="1048" width="48" height="2"/></g>
<!-- tray -->
<circle cx="1452" cy="1031" r="10.500" fill="#1a8ce0" stroke="#fff" stroke-width="2"/><text x="1452" y="1037" style="font-size:16px;font-weight:bold;fill:#fff;text-anchor:middle">?</text>
<path d="M1473 1034L1478 1029L1483 1034" fill="none" stroke="#fff" stroke-width="1.200"/>
<path d="M1496 1037A4 4 0 0 1 1495 1030A5 5 0 0 1 1505 1027A5 5 0 0 1 1511 1037Z" fill="#e8e8e8"/>
<path d="M1523 1023L1527 1026L1523 1029L1519 1026ZM1531 1023L1535 1026L1531 1029L1527 1026ZM1523 1029L1527 1032L1523 1035L1519 1032ZM1531 1029L1535 1032L1531 1035L1527 1032ZM1527 1033L1530 1035.500L1527 1038L1524 1035.500Z" fill="#fff"/>
<path d="M1546 1039A12 12 0 0 1 1556 1027M1549 1039A8 8 0 0 1 1556 1032M1552 1039A4 4 0 0 1 1556 1036" fill="none" stroke="#ccc" stroke-dasharray="1.500 1"/><path d="M1556 1037V1040H1559" stroke="#ccc" fill="none"/>
<text x="1574" y="1026" style="font-size:12px;fill:#fff" textLength="43" lengthAdjust="spacingAndGlyphs">4:36 PM</text>
<text x="1572" y="1044" style="font-size:12px;fill:#fff" textLength="46" lengthAdjust="spacingAndGlyphs">4/9/2020</text>
<rect x="1639" y="1022" width="15" height="15" fill="#fff"/><path d="M1642 1026H1651M1642 1029H1651M1642 1032H1648" stroke="#333"/>
<circle cx="1654" cy="1037" r="9" fill="#2a2a2a" stroke="#888"/><text x="1654" y="1041.500" style="font-size:12px;fill:#fff;text-anchor:middle">23</text>
</svg>
</body></html>
